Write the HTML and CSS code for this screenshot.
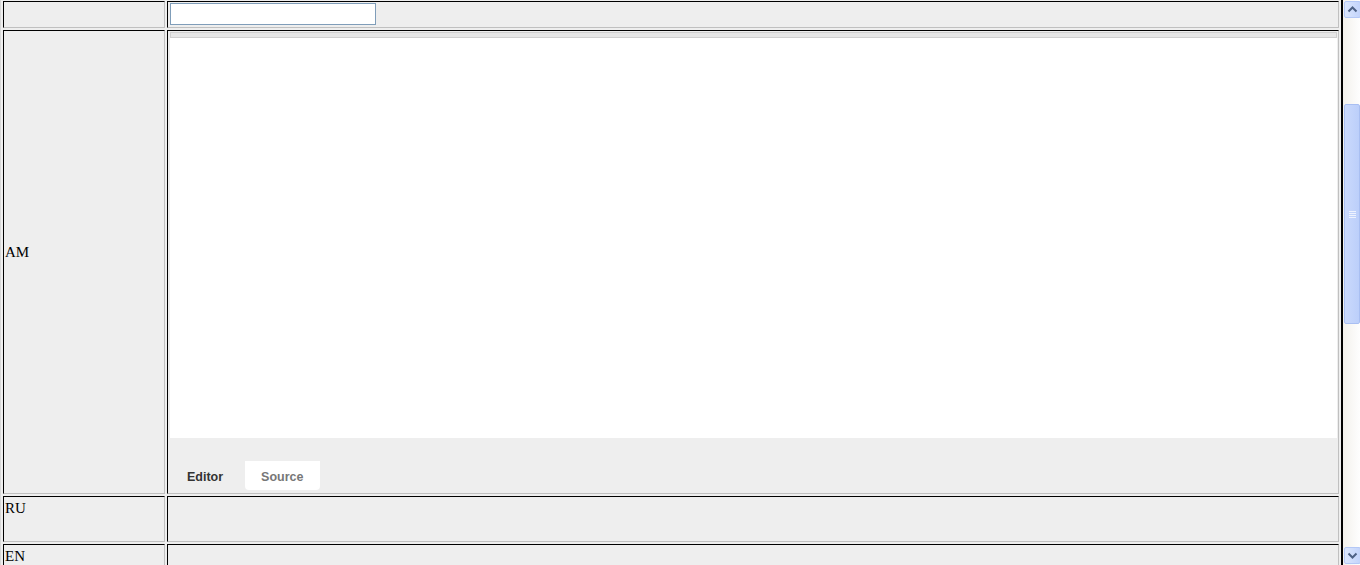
FILE: index.html
```html
<!DOCTYPE html>
<html>
<head>
  <meta charset="utf-8">
  <title>Translations</title>
  <link rel="stylesheet" href="styles.css">
</head>
<body>
  <div class="viewport">
    <div class="page">
      <table class="lang-table">
        <tr class="row-title">
          <td class="label"></td>
          <td class="field"><input type="text" class="text-input"></td>
        </tr>
        <tr class="row-editor">
          <td class="label label-middle">AM</td>
          <td class="field">
            <div class="editor">
              <div class="editor-toolbar"></div>
              <div class="editor-area"></div>
              <div class="editor-tabs">
                <span class="tab tab-active">Editor</span>
                <span class="tab tab-source">Source</span>
              </div>
            </div>
          </td>
        </tr>
        <tr class="row-lang">
          <td class="label">RU</td>
          <td class="field"></td>
        </tr>
        <tr class="row-lang">
          <td class="label">EN</td>
          <td class="field"></td>
        </tr>
      </table>
    </div>

    <div class="scrollbar">
      <div class="scroll-btn">
        <svg width="15" height="15" viewBox="0 0 15 15"><path d="M3.5 9.5 L7.5 5.5 L11.5 9.5" fill="none" stroke="#4d6185" stroke-width="2"/></svg>
      </div>
      <div class="scroll-track">
        <div class="scroll-thumb">
          <div class="grip"></div>
        </div>
      </div>
      <div class="scroll-btn">
        <svg width="15" height="15" viewBox="0 0 15 15"><path d="M3.5 5.5 L7.5 9.5 L11.5 5.5" fill="none" stroke="#4d6185" stroke-width="2"/></svg>
      </div>
    </div>
  </div>
</body>
</html>
```

FILE: styles.css
```css
body {
  margin: 0;
  font-family: 'Liberation Serif', 'Times New Roman', serif;
  font-size: 15px;
  background: #eeeeee;
  overflow: hidden;
}

.viewport {
  display: flex;
  height: 565px;
  overflow: hidden;
}

.page {
  width: 1343px;
  overflow: hidden;
  background: #eeeeee;
}

.lang-table {
  width: 1342px;
  margin-top: -2px;
  border-collapse: separate;
  border-spacing: 2px;
  border-top: 1px solid #d8d8d8;
  border-left: 1px solid #d8d8d8;
  border-right: 1px solid #000;
  border-bottom: 1px solid #000;
  table-layout: fixed;
  background: #eeeeee;
}

.lang-table td {
  padding: 1px;
  border-top: 1px solid #000;
  border-left: 1px solid #000;
  border-right: 1px solid #c0c0c0;
  border-bottom: 1px solid #c0c0c0;
  vertical-align: top;
  background: #eeeeee;
  color: #000;
}

.lang-table td.field {
  padding-left: 2px;
}

.lang-table td.label {
  width: 158px;
  line-height: 17px;
}

.lang-table td.label-middle {
  vertical-align: middle;
  padding-bottom: 20px;
}

.row-title td {
  height: 23px;
}

.text-input {
  display: block;
  width: 206px;
  height: 22px;
  margin: 0;
  padding: 0 2px;
  box-sizing: border-box;
  border: 1px solid #7f9db9;
  background: #fff;
  font-family: inherit;
}

.editor {
  width: 1167px;
}

.editor-toolbar {
  height: 4px;
  border: 1px solid #cfcfcf;
  background: #e6e6e6;
}

.editor-area {
  height: 400px;
  background: #fff;
}

.editor-tabs {
  display: flex;
  height: 54px;
  padding: 23px 0 0 1px;
  box-sizing: border-box;
  gap: 6px;
}

.tab {
  display: flex;
  align-items: center;
  height: 29px;
  padding: 2px 16px 0 16px;
  box-sizing: border-box;
  font-family: 'Liberation Sans', Arial, sans-serif;
  font-weight: bold;
  font-size: 12.5px;
  border-radius: 0 0 4px 4px;
}

.tab-active {
  color: #333;
}

.tab-source {
  background: #fff;
  color: #777;
}

.row-lang td {
  height: 42px;
}

.row-lang td.label {
  padding-top: 3px;
  height: 40px;
}

.scrollbar {
  width: 17px;
  display: flex;
  flex-direction: column;
  background: linear-gradient(to right, #f3f1ec, #fefefe);
  border-left: 1px solid #000;
  box-sizing: content-box;
}

.scroll-btn {
  height: 15px;
  margin: 1px 0 1px 1px;
  width: 15px;
  border: 1px solid #b4c8f6;
  border-radius: 2px;
  background: linear-gradient(to right, #dbe6fd, #c3d4fb);
  box-sizing: content-box;
  display: flex;
}

.scroll-track {
  flex: 1;
  position: relative;
}

.scroll-thumb {
  position: absolute;
  top: 85px;
  left: 1px;
  width: 14px;
  height: 218px;
  border: 1px solid #a9bff2;
  border-radius: 2px;
  background: linear-gradient(to right, #cad9fc, #bccffa);
  display: flex;
  align-items: center;
  justify-content: center;
}

.grip {
  width: 7px;
  height: 7px;
  background: repeating-linear-gradient(to bottom, #eef3fe 0, #eef3fe 1px, transparent 1px, transparent 2px);
}
```
